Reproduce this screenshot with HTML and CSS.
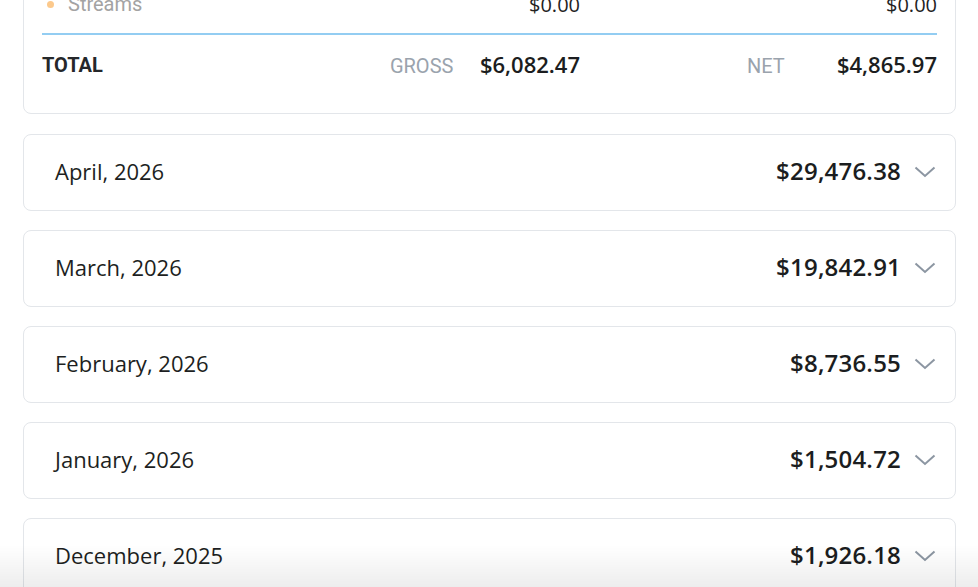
FILE: index.html
```html
<!DOCTYPE html>
<html lang="en">
<head>
    <meta charset="UTF-8">
    <meta name="viewport" content="width=device-width, initial-scale=1.0">
    <title>Earnings</title>
    <link rel="stylesheet" href="styles.css">
</head>
<body>
    <div class="page">
        <!-- current month breakdown, scrolled partly out of view -->
        <div class="summary">
            <div class="summary-row">
                <div class="source"><span class="dot"></span>Streams</div>
                <div class="cell">$0.00</div>
                <div class="cell">$0.00</div>
            </div>
            <div class="summary-rule"></div>
            <div class="summary-row total">
                <div class="total-label">TOTAL</div>
                <div class="cell"><span class="tag">GROSS</span><span class="money">$6,082.47</span></div>
                <div class="cell"><span class="tag">NET</span><span class="money">$4,865.97</span></div>
            </div>
        </div>

        <ul class="months">
            <li class="month"><span class="month-name">April, 2026</span><span class="month-sum">$29,476.38</span><svg class="chev" viewBox="0 0 22 12"><path d="M1.5 1.5 L11 10 L20.5 1.5"/></svg></li>
            <li class="month"><span class="month-name">March, 2026</span><span class="month-sum">$19,842.91</span><svg class="chev" viewBox="0 0 22 12"><path d="M1.5 1.5 L11 10 L20.5 1.5"/></svg></li>
            <li class="month"><span class="month-name">February, 2026</span><span class="month-sum">$8,736.55</span><svg class="chev" viewBox="0 0 22 12"><path d="M1.5 1.5 L11 10 L20.5 1.5"/></svg></li>
            <li class="month"><span class="month-name">January, 2026</span><span class="month-sum">$1,504.72</span><svg class="chev" viewBox="0 0 22 12"><path d="M1.5 1.5 L11 10 L20.5 1.5"/></svg></li>
            <li class="month"><span class="month-name">December, 2025</span><span class="month-sum">$1,926.18</span><svg class="chev" viewBox="0 0 22 12"><path d="M1.5 1.5 L11 10 L20.5 1.5"/></svg></li>
        </ul>
    </div>
    <div class="fade"></div>
</body>
</html>
```

FILE: styles.css
```css
*{
    margin: 0;
    padding: 0;
    box-sizing: border-box;
}
html, body{
    height: 100%;
    overflow: hidden;
}
body{
    background: #fff;
    color: #1b1d20;
    font-family: "Open Sans", "Liberation Sans", sans-serif;
}
.page{
    padding: 0 22px 0 23px;
}

/* summary card */
.summary{
    margin-top: -18px;
    border: 1px solid #e3e6ea;
    border-radius: 8px;
    padding: 0 18px 20px;
}
.summary-row{
    display: grid;
    grid-template-columns: 1fr 200px 357px;
    align-items: center;
    height: 42px;
}
.summary-row.total{
    height: 58px;
}
.source{
    display: flex;
    align-items: center;
    font-family: Roboto, sans-serif;
    font-size: 20px;
    color: #a3a3a3;
}
.dot{
    width: 7px;
    height: 7px;
    border-radius: 50%;
    background: #fcc98c;
    margin: 0 14px 0 5px;
}
.cell{
    display: flex;
    justify-content: flex-end;
    align-items: baseline;
    font-size: 20px;
    color: #222;
}
.summary-rule{
    margin-top: 8px;
    height: 2px;
    background: #93cdf2;
}
.total-label{
    font-family: Roboto, sans-serif;
    font-weight: 700;
    font-size: 20px;
    color: #25272a;
    padding-top: 2px;
}
.tag{
    width: 90px;
    font-family: Roboto, sans-serif;
    font-size: 20px;
    color: #9aa3ad;
}
.money{
    font-weight: 600;
    font-size: 22px;
    color: #1b1d20;
}

/* month list */
.months{
    list-style: none;
    margin-top: 20px;
    display: flex;
    flex-direction: column;
    gap: 19px;
}
.month{
    display: flex;
    align-items: center;
    height: 77px;
    border: 1px solid #e3e6ea;
    border-radius: 8px;
    padding: 0 19px 4px 31px;
}
.month-name{
    flex: 1;
    font-size: 22px;
    color: #1d1f22;
}
.month-sum{
    font-weight: 600;
    font-size: 24px;
    letter-spacing: 0.2px;
    color: #1b1d20;
}
.chev{
    width: 22px;
    height: 12px;
    margin: 3px 0 0 13px;
    fill: none;
    stroke: #8c96a2;
    stroke-width: 2;
}

/* bottom shadow of the tab bar */
.fade{
    position: fixed;
    left: 0;
    right: 0;
    bottom: 0;
    height: 42px;
    background: linear-gradient(to bottom, rgba(0,0,0,0), rgba(0,0,0,0.07));
    pointer-events: none;
}
```
